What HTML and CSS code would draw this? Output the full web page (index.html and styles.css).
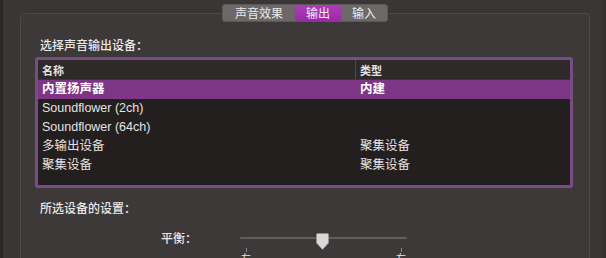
FILE: index.html
```html
<!DOCTYPE html>
<html lang="zh-CN">
<head>
<meta charset="utf-8">
<title>声音</title>
<link rel="stylesheet" href="styles.css">
</head>
<body>
<div class="window">
  <div class="group">
    <div class="tabs">
      <span class="tab">声音效果</span>
      <span class="tab active">输出</span>
      <span class="tab">输入</span>
    </div>
    <div class="label">选择声音输出设备：</div>
    <div class="table">
      <div class="row head">
        <div class="c-name">名称</div>
        <div class="c-type">类型</div>
      </div>
      <div class="row selected">
        <div class="c-name">内置扬声器</div>
        <div class="c-type">内建</div>
      </div>
      <div class="row">
        <div class="c-name">Soundflower (2ch)</div>
        <div class="c-type"></div>
      </div>
      <div class="row">
        <div class="c-name">Soundflower (64ch)</div>
        <div class="c-type"></div>
      </div>
      <div class="row">
        <div class="c-name">多输出设备</div>
        <div class="c-type">聚集设备</div>
      </div>
      <div class="row">
        <div class="c-name">聚集设备</div>
        <div class="c-type">聚集设备</div>
      </div>
    </div>
    <div class="label label2">所选设备的设置：</div>
    <div class="balance">
      <div class="bal-label">平衡：</div>
      <div class="slider">
        <div class="track"></div>
        <svg class="thumb" width="13" height="17" viewBox="0 0 13 17"><path d="M1.5 0.5 H11.5 Q12.5 0.5 12.5 1.5 V10 L6.5 16.5 L0.5 10 V1.5 Q0.5 0.5 1.5 0.5 Z" fill="#d9d7d7" stroke="#9a9696" stroke-width="0.6"/></svg>
        <div class="ticks">
          <div class="tick"><span class="mark"></span><span class="tlabel">左</span></div>
          <div class="tick"><span class="mark"></span><span class="tlabel">右</span></div>
        </div>
      </div>
    </div>
  </div>
</div>
</body>
</html>
```
FILE: styles.css
```css
html, body {
  margin: 0;
  padding: 0;
  width: 606px;
  height: 258px;
  overflow: hidden;
  background: #3a3635;
  font-family: "Noto Sans CJK SC", "Noto Sans", sans-serif;
  font-size: 12px;
  color: #e6e4e4;
}

.window {
  height: 258px;
  box-sizing: border-box;
  border-left: 3px solid #2a2726;
  border-right: 3px solid #353131;
  padding: 13px 13px 0 17px;
  overflow: hidden;
}

.group {
  height: 260px;
  box-sizing: border-box;
  border: 1px solid #4d4948;
  border-bottom: none;
  border-radius: 5px 5px 0 0;
  background: #3d3938;
  display: flex;
  flex-direction: column;
}

.tabs {
  align-self: center;
  margin-top: -10px;
  display: flex;
  height: 16px;
  background: #6c6867;
  border: 1px solid #5c5857;
  border-radius: 3px;
  overflow: hidden;
}

.tab {
  display: flex;
  align-items: center;
  justify-content: center;
  color: #ecebeb;
  line-height: 16px;
  padding: 0 11px;
}

.tab:first-child { padding: 0 12px; }

.tab.active {
  background: linear-gradient(#b13bbb, #9a2aa3);
  color: #f4e8f5;
}

.label {
  margin: 15px 0 0 19px;
  line-height: 16px;
  font-weight: 500;
  color: #e9e7e7;
}

.table {
  margin: 4px 16px 0 14px;
  height: 131px;
  box-sizing: border-box;
  border: 3px solid #7a4c84;
  border-radius: 3px;
  background: #231f1f;
  display: flex;
  flex-direction: column;
}

.row {
  display: flex;
  height: 19px;
  line-height: 19px;
  color: #e4e2e2;
  font-family: "Liberation Sans", "Noto Sans CJK SC", sans-serif;
  font-size: 12.5px;
}

.row.head {
  height: 20px;
  line-height: 20px;
  background: #2d2a29;
  border-bottom: 1px solid #3a3636;
  box-sizing: border-box;
  font-family: "Noto Sans CJK SC", sans-serif;
  font-size: 11px;
  font-weight: 700;
}

.row.selected {
  background: #7d3586;
  color: #ffffff;
  font-weight: 700;
}

.c-name {
  width: 318px;
  padding-left: 4px;
  box-sizing: border-box;
}

.head .c-name { border-right: 1px solid #4f4b4b; }

.c-type {
  padding-left: 4px;
}

.label2 {
  margin-top: 12px;
}

.balance {
  display: flex;
  align-items: flex-start;
  margin-top: 14px;
}

.bal-label {
  width: 176px;
  text-align: right;
  line-height: 16px;
  font-weight: 500;
  color: #e9e7e7;
}

.slider {
  position: relative;
  width: 167px;
  margin-left: 43px;
  height: 40px;
}

.track {
  margin-top: 7px;
  height: 2px;
  background: #625e5d;
  border-radius: 1px;
}

.thumb {
  position: absolute;
  left: 76px;
  top: 3px;
}

.ticks {
  display: flex;
  justify-content: space-between;
  margin-top: 9px;
}

.tick {
  display: flex;
  flex-direction: column;
  align-items: center;
  width: 12px;
}

.mark {
  width: 1px;
  height: 4px;
  background: #8a8686;
}

.tlabel {
  font-size: 10px;
  line-height: 12px;
  color: #e6e4e4;
}
```
